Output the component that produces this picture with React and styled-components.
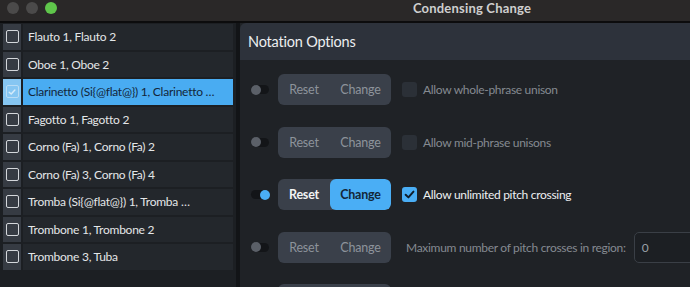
import styled, { createGlobalStyle } from 'styled-components';

const GlobalStyle = createGlobalStyle`
  html, body {
    margin: 0;
    padding: 0;
    background: #1f2226;
  }
  * { box-sizing: border-box; }
`;

const FONT = `Lato, "Liberation Sans", sans-serif`;

// Window frame
const Window = styled.div`
  width: 690px;
  height: 287px;
  overflow: hidden;
  display: flex;
  flex-direction: column;
  background: #1f2226;
  font-family: ${FONT};
`;

const TitleBar = styled.div`
  position: relative;
  height: 23px;
  flex: none;
  background: #2a2828;
  border-bottom: 2px solid #0c0c0d;
  display: flex;
  align-items: center;
  justify-content: center;
`;

const Lights = styled.div`
  position: absolute;
  left: 7px;
  top: 2px;
  display: flex;
  gap: 7px;
`;

const Light = styled.span`
  width: 12px;
  height: 12px;
  border-radius: 50%;
  background: ${p => p.$color};
`;

const Title = styled.div`
  margin-left: 254px;
  margin-top: -5px;
  font-size: 13px;
  font-weight: 700;
  letter-spacing: 0.2px;
  color: #cfcfcf;
`;

const Body = styled.div`
  flex: 1;
  display: flex;
  min-height: 0;
`;

// Left list
const ListPanel = styled.div`
  width: 240px;
  flex: none;
  padding: 1px 3px 0 3px;
  background: #1c1f23;
  display: flex;
  flex-direction: column;
  gap: 2px;
  border-right: 4px solid #121417;
`;

const ListRow = styled.div`
  height: 25.5px;
  flex: none;
  display: flex;
  gap: 2px;
`;

const CheckCell = styled.div`
  width: 18px;
  display: flex;
  align-items: center;
  justify-content: center;
  background: ${p => (p.$selected ? '#86c6f2' : '#363b43')};
`;

const NameCell = styled.div`
  flex: 1;
  min-width: 0;
  display: flex;
  align-items: center;
  padding-left: 5px;
  font-size: 12px;
  letter-spacing: -0.25px;
  white-space: nowrap;
  overflow: hidden;
  background: ${p => (p.$selected ? '#49acf2' : '#23272c')};
  color: ${p => (p.$selected ? '#13263a' : '#e4e6e8')};
`;

const Box = styled.span`
  width: 13px;
  height: 13px;
  border-radius: 2px;
  border: 1.7px solid ${p => (p.$selected ? '#b9dcf5' : '#d4d7db')};
  display: flex;
  align-items: center;
  justify-content: center;
`;

// Right options panel
const OptionsPanel = styled.div`
  flex: 1;
  display: flex;
  flex-direction: column;
  background: #1f2226;
  border-top-left-radius: 6px;
  overflow: hidden;
`;

const PanelHeader = styled.div`
  height: 37px;
  flex: none;
  background: #2d323b;
  display: flex;
  align-items: center;
  padding-left: 8px;
  font-size: 14.5px;
  letter-spacing: -0.2px;
  color: #eceef0;
`;

const OptionList = styled.div`
  padding: 14px 0 0 11px;
  display: flex;
  flex-direction: column;
  gap: 21.5px;
`;

const OptionRow = styled.div`
  height: 31px;
  flex: none;
  display: flex;
  align-items: center;
`;

const Toggle = styled.span`
  position: relative;
  width: 18px;
  height: 9px;
  border-radius: 5px;
  background: #131518;
  margin-right: 9px;
  flex: none;

  &::after {
    content: '';
    position: absolute;
    top: -0.5px;
    left: ${p => (p.$on ? '9px' : '0')};
    width: 10px;
    height: 10px;
    border-radius: 50%;
    background: ${p => (p.$on ? '#4aaef5' : '#5b6068')};
  }
`;

const SegGroup = styled.div`
  display: flex;
  height: 31px;
  border-radius: 6px;
  overflow: hidden;
  background: #3a404a;
  flex: none;
`;

const Seg = styled.span`
  width: ${p => p.$w}px;
  display: flex;
  align-items: center;
  justify-content: center;
  font-size: 12.5px;
  letter-spacing: -0.2px;
  font-weight: ${p => (p.$active ? 700 : 400)};
  color: ${p => (p.$active ? (p.$blue ? '#132638' : '#f2f3f4') : '#8d939b')};
  background: ${p => (p.$blue ? '#4aaef5' : 'transparent')};
  border-radius: ${p => (p.$blue ? '6px' : '0')};
`;

const OptCheck = styled.span`
  width: 15px;
  height: 15px;
  border-radius: 3px;
  margin-left: 11px;
  margin-right: 6px;
  flex: none;
  display: flex;
  align-items: center;
  justify-content: center;
  background: ${p => (p.$on ? '#4aaef5' : '#2b3037')};
`;

const Label = styled.span`
  font-size: 12px;
  letter-spacing: -0.3px;
  white-space: nowrap;
  color: ${p => (p.$on ? '#eef0f2' : '#858a91')};
  margin-left: ${p => p.$indent || 0}px;
`;

const NumberInput = styled.div`
  margin-left: 8px;
  height: 31px;
  width: 80px;
  flex: none;
  border: 1px solid #3a3f46;
  border-radius: 5px;
  background: #1c1f23;
  display: flex;
  align-items: center;
  padding-left: 7px;
  font-size: 12px;
  color: #9aa0a7;
`;

const instruments = [
  'Flauto 1, Flauto 2',
  'Oboe 1, Oboe 2',
  'Clarinetto (Si{@flat@}) 1, Clarinetto …',
  'Fagotto 1, Fagotto 2',
  'Corno (Fa) 1, Corno (Fa) 2',
  'Corno (Fa) 3, Corno (Fa) 4',
  'Tromba (Si{@flat@}) 1, Tromba …',
  'Trombone 1, Trombone 2',
  'Trombone 3, Tuba',
];

const Tick = ({ color, size = 9 }) => (
  <svg width={size} height={size} viewBox="0 0 10 10">
    <path d="M1.5 5.2 L4 7.6 L8.6 2.4" fill="none" stroke={color} strokeWidth="1.8" strokeLinecap="round" strokeLinejoin="round" />
  </svg>
);

const Buttons = ({ active, hideText }) => (
  <SegGroup>
    <Seg $w={52} $active={active}>{hideText ? '' : 'Reset'}</Seg>
    <Seg $w={61} $active={active} $blue={active}>{hideText ? '' : 'Change'}</Seg>
  </SegGroup>
);

export default function App() {
  return (
    <>
      <GlobalStyle />
      <Window>
        <TitleBar>
          <Lights>
            <Light $color="#4b4a4a" />
            <Light $color="#4b4a4a" />
            <Light $color="#5fc64b" />
          </Lights>
          <Title>Condensing Change</Title>
        </TitleBar>
        <Body>
          <ListPanel>
            {instruments.map((name, i) => {
              const sel = i === 2;
              return (
                <ListRow key={name}>
                  <CheckCell $selected={sel}>
                    <Box $selected={sel}>{sel && <Tick color="#d6ebfa" size={8} />}</Box>
                  </CheckCell>
                  <NameCell $selected={sel}>{name}</NameCell>
                </ListRow>
              );
            })}
          </ListPanel>
          <OptionsPanel>
            <PanelHeader>Notation Options</PanelHeader>
            <OptionList>
              <OptionRow>
                <Toggle />
                <Buttons />
                <OptCheck />
                <Label>Allow whole-phrase unison</Label>
              </OptionRow>
              <OptionRow>
                <Toggle />
                <Buttons />
                <OptCheck />
                <Label>Allow mid-phrase unisons</Label>
              </OptionRow>
              <OptionRow>
                <Toggle $on />
                <Buttons active />
                <OptCheck $on><Tick color="#0f1e2c" size={11} /></OptCheck>
                <Label $on>Allow unlimited pitch crossing</Label>
              </OptionRow>
              <OptionRow>
                <Toggle />
                <Buttons />
                <Label $indent={15}>Maximum number of pitch crosses in region:</Label>
                <NumberInput>0</NumberInput>
              </OptionRow>
              <OptionRow>
                <Toggle />
                <Buttons hideText />
              </OptionRow>
            </OptionList>
          </OptionsPanel>
        </Body>
      </Window>
    </>
  );
}
